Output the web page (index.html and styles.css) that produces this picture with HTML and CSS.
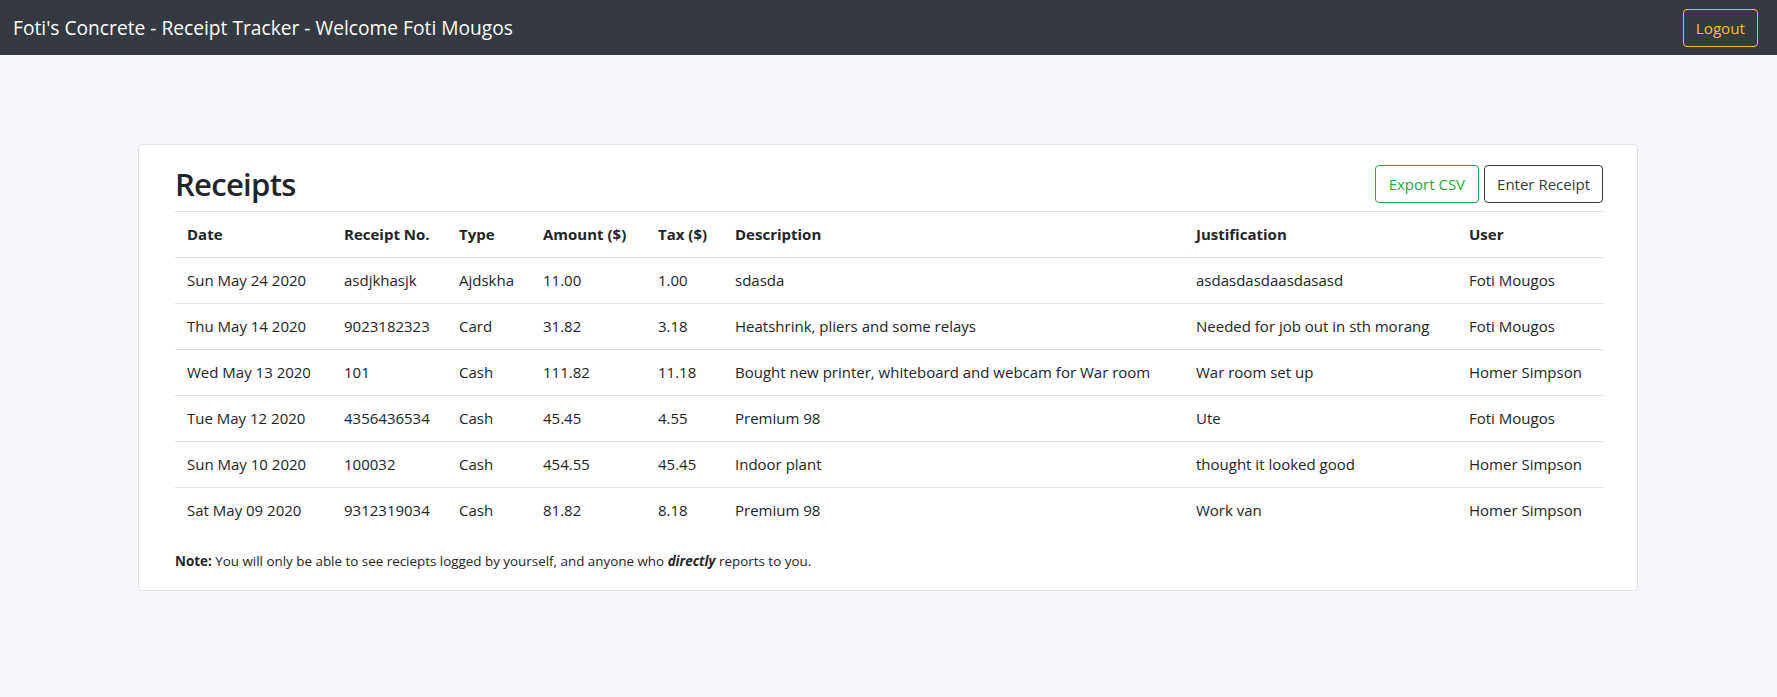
FILE: index.html
```html
<!DOCTYPE html>
<html lang="en">
<head>
<meta charset="utf-8">
<title>Receipt Tracker</title>
<link rel="stylesheet" href="styles.css">
</head>
<body>
<nav class="navbar">
  <span class="brand">Foti's Concrete - Receipt Tracker - Welcome Foti Mougos</span>
  <button class="btn btn-warning">Logout</button>
</nav>
<main class="page">
  <section class="card">
    <div class="card-head">
      <h1 class="title">Receipts</h1>
      <div class="actions">
        <button class="btn btn-success">Export CSV</button>
        <button class="btn btn-dark">Enter Receipt</button>
      </div>
    </div>
    <table class="table">
      <colgroup>
        <col class="c-date"><col class="c-no"><col class="c-type"><col class="c-amt"><col class="c-tax"><col class="c-desc"><col class="c-just"><col class="c-user">
      </colgroup>
      <thead>
        <tr><th>Date</th><th>Receipt No.</th><th>Type</th><th>Amount ($)</th><th>Tax ($)</th><th>Description</th><th>Justification</th><th>User</th></tr>
      </thead>
      <tbody>
        <tr><td>Sun May 24 2020</td><td>asdjkhasjk</td><td>Ajdskha</td><td>11.00</td><td>1.00</td><td>sdasda</td><td>asdasdasdaasdasasd</td><td>Foti Mougos</td></tr>
        <tr><td>Thu May 14 2020</td><td>9023182323</td><td>Card</td><td>31.82</td><td>3.18</td><td>Heatshrink, pliers and some relays</td><td>Needed for job out in sth morang</td><td>Foti Mougos</td></tr>
        <tr><td>Wed May 13 2020</td><td>101</td><td>Cash</td><td>111.82</td><td>11.18</td><td>Bought new printer, whiteboard and webcam for War room</td><td>War room set up</td><td>Homer Simpson</td></tr>
        <tr><td>Tue May 12 2020</td><td>4356436534</td><td>Cash</td><td>45.45</td><td>4.55</td><td>Premium 98</td><td>Ute</td><td>Foti Mougos</td></tr>
        <tr><td>Sun May 10 2020</td><td>100032</td><td>Cash</td><td>454.55</td><td>45.45</td><td>Indoor plant</td><td>thought it looked good</td><td>Homer Simpson</td></tr>
        <tr><td>Sat May 09 2020</td><td>9312319034</td><td>Cash</td><td>81.82</td><td>8.18</td><td>Premium 98</td><td>Work van</td><td>Homer Simpson</td></tr>
      </tbody>
    </table>
    <p class="note"><strong>Note:</strong> You will only be able to see reciepts logged by yourself, and anyone who <strong><em>directly</em></strong> reports to you.</p>
  </section>
</main>
</body>
</html>
```
FILE: styles.css
```css
* { box-sizing: border-box; }
html, body {
  margin: 0;
  height: 100%;
}
body {
  font-family: "Open Sans", "Noto Sans", sans-serif;
  font-size: 15px;
  color: #212529;
  background: #f7f8fb;
}
.navbar {
  height: 55px;
  background: #343a40;
  display: flex;
  align-items: center;
  justify-content: space-between;
  padding: 0 19px 0 13px;
}
.brand {
  color: #fff;
  font-size: 19.2px;
}
.btn {
  font-family: inherit;
  font-size: 15px;
  background: transparent;
  border: 1px solid;
  border-radius: 4px;
  height: 38px;
  padding: 0 13px;
  line-height: 36px;
  cursor: pointer;
}
.btn-warning { color: #ffc107; border-color: #ffc107; padding: 0 12px; font-size: 15.2px; }
.btn-success { color: #28a745; border-color: #28a745; }
.btn-dark { color: #343a40; border-color: #343a40; padding: 0 12px; }
.page {
  padding: 89px 139px 0 138px;
}
.card {
  background: #fff;
  border: 1px solid #dee2e6;
  border-radius: 4px;
  padding: 20px 34px 19px 36px;
}
.card-head {
  display: flex;
  justify-content: space-between;
  align-items: flex-start;
  padding-bottom: 8px;
}
.title {
  margin: 0;
  font-size: 31px;
  font-weight: 600;
  line-height: 38px;
  letter-spacing: -0.7px;
}
.actions {
  display: flex;
  gap: 5px;
}
.table {
  width: 100%;
  border-collapse: collapse;
  table-layout: fixed;
}
.c-date { width: 157px; }
.c-no { width: 115px; }
.c-type { width: 84px; }
.c-amt { width: 115px; }
.c-tax { width: 77px; }
.c-desc { width: 461px; }
.c-just { width: 273px; }
.c-user { width: 146px; }
.table th, .table td {
  text-align: left;
  padding: 0 12px;
  border-top: 1px solid #dee2e6;
  white-space: nowrap;
}
.table th {
  line-height: 45px;
  font-weight: 700;
}
.table td {
  line-height: 45px;
}
.note {
  font-size: 13.4px;
  margin: 18px 0 0;
  line-height: 20px;
}
```
